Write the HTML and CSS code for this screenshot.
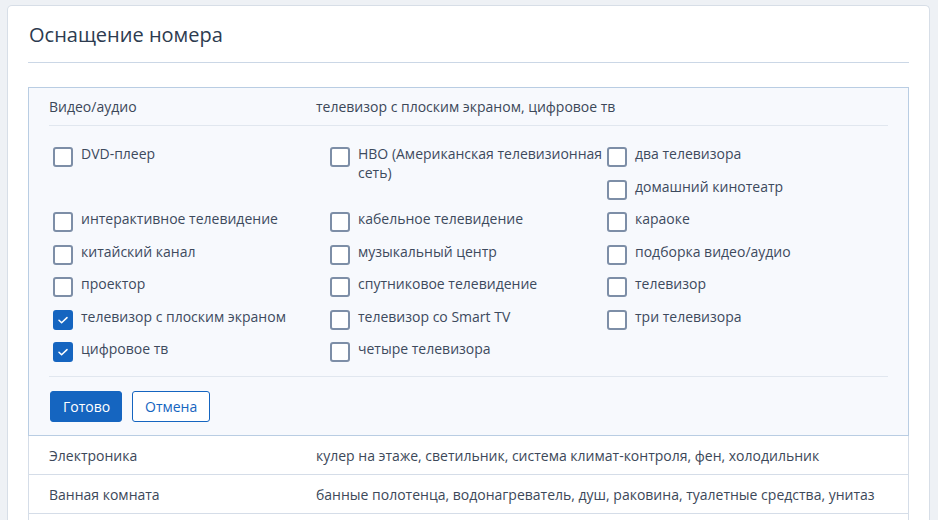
FILE: index.html
```html
<!DOCTYPE html>
<html lang="ru">
<head>
    <meta charset="UTF-8">
    <meta name="viewport" content="width=device-width, initial-scale=1.0">
    <title>Оснащение номера</title>
    <link rel="stylesheet" href="styles.css">
</head>
<body>
    <div class="card">
        <h2 class="card-title">Оснащение номера</h2>

        <div class="amenities">
            <div class="group group-open">
                <div class="group-head">
                    <span class="group-name">Видео/аудио</span>
                    <span class="group-value">телевизор с плоским экраном, цифровое тв</span>
                </div>

                <div class="options">
                    <label class="option tall"><span class="box"></span>DVD-плеер</label>
                    <label class="option tall"><span class="box"></span>HBO (Американская телевизионная сеть)</label>
                    <label class="option"><span class="box"></span>два телевизора</label>
                    <label class="option"><span class="box"></span>домашний кинотеатр</label>
                    <label class="option"><span class="box"></span>интерактивное телевидение</label>
                    <label class="option"><span class="box"></span>кабельное телевидение</label>
                    <label class="option"><span class="box"></span>караоке</label>
                    <label class="option"><span class="box"></span>китайский канал</label>
                    <label class="option"><span class="box"></span>музыкальный центр</label>
                    <label class="option"><span class="box"></span>подборка видео/аудио</label>
                    <label class="option"><span class="box"></span>проектор</label>
                    <label class="option"><span class="box"></span>спутниковое телевидение</label>
                    <label class="option"><span class="box"></span>телевизор</label>
                    <label class="option"><span class="box checked"><svg viewBox="0 0 20 20" width="20" height="20"><path d="M6 10.3l2.6 2.5L14 7.6" fill="none" stroke="#fff" stroke-width="1.5" stroke-linecap="round" stroke-linejoin="round"/></svg></span>телевизор с плоским экраном</label>
                    <label class="option"><span class="box"></span>телевизор со Smart TV</label>
                    <label class="option"><span class="box"></span>три телевизора</label>
                    <label class="option"><span class="box checked"><svg viewBox="0 0 20 20" width="20" height="20"><path d="M6 10.3l2.6 2.5L14 7.6" fill="none" stroke="#fff" stroke-width="1.5" stroke-linecap="round" stroke-linejoin="round"/></svg></span>цифровое тв</label>
                    <label class="option"><span class="box"></span>четыре телевизора</label>
                </div>

                <div class="actions">
                    <button class="btn btn-primary">Готово</button>
                    <button class="btn btn-outline">Отмена</button>
                </div>
            </div>

            <div class="group">
                <div class="group-head">
                    <span class="group-name">Электроника</span>
                    <span class="group-value">кулер на этаже, светильник, система климат-контроля, фен, холодильник</span>
                </div>
            </div>

            <div class="group">
                <div class="group-head">
                    <span class="group-name">Ванная комната</span>
                    <span class="group-value">банные полотенца, водонагреватель, душ, раковина, туалетные средства, унитаз</span>
                </div>
            </div>

            <div class="group">
                <div class="group-head">
                    <span class="group-name">&nbsp;</span>
                    <span class="group-value"></span>
                </div>
            </div>
        </div>
    </div>
</body>
</html>
```

FILE: styles.css
```css
* {
    margin: 0;
    padding: 0;
    box-sizing: border-box;
}

body {
    font-family: 'Open Sans', 'Noto Sans', sans-serif;
    font-size: 14px;
    color: #3c4859;
    background-color: #eef1f5;
    padding: 5px 8px 0 7px;
    height: 520px;
    overflow: hidden;
}

.card {
    background-color: #fff;
    border: 1px solid #d7dee7;
    border-bottom: none;
    border-radius: 5px 5px 0 0;
    padding: 15px 20px 0 20px;
    min-height: 600px;
}

.card-title {
    font-size: 20px;
    font-weight: 400;
    line-height: 28px;
    color: #2d3b4f;
    padding-left: 1px;
    padding-bottom: 13px;
    border-bottom: 1px solid #cbd7e6;
    margin-bottom: 24px;
}

.amenities {
    border-top: 1px solid #d5dde8;
}

.group {
    border: 1px solid #d5dde8;
    border-top: none;
}

.group-open {
    background-color: #f7f9fd;
    border: 1px solid #b9cde3;
    margin-top: -1px;
    padding: 0 20px;
}

.group-head {
    display: flex;
    align-items: center;
    height: 38px;
    padding: 0 20px;
}

.group-open .group-head {
    height: 38px;
    padding: 0;
    border-bottom: 1px solid #e1e7ef;
}

.group-name {
    width: 267px;
    flex-shrink: 0;
}

.options {
    display: grid;
    grid-template-columns: repeat(3, 1fr);
    grid-auto-rows: 20px;
    row-gap: 12.5px;
    padding: 18px 4px 17px 4px;
    border-bottom: 1px solid #e1e7ef;
}

.option {
    display: flex;
    align-items: flex-start;
    gap: 8px;
    line-height: 19px;
    color: #3d4a5d;
    cursor: pointer;
}

.option.tall {
    grid-row: span 2;
}

.box {
    flex-shrink: 0;
    width: 20px;
    height: 20px;
    border: 2px solid #7d8ea7;
    border-radius: 3px;
    background-color: #fff;
    margin-top: 3px;
}

.box.checked {
    background-color: #1565c0;
    border-color: #1565c0;
    display: flex;
    align-items: center;
    justify-content: center;
}

.box.checked svg {
    flex-shrink: 0;
}

.actions {
    display: flex;
    gap: 10px;
    padding: 14px 0 13px 1px;
}

.btn {
    font-family: 'Open Sans', 'Noto Sans', sans-serif;
    font-size: 14px;
    height: 31px;
    border-radius: 3px;
    padding: 0 12px;
    cursor: pointer;
}

.btn-primary {
    background-color: #1565c0;
    border: 1px solid #1565c0;
    color: #fff;
    width: 72px;
}

.btn-outline {
    background-color: #fff;
    border: 1px solid #1565c0;
    color: #1565c0;
    width: 78px;
}
```
